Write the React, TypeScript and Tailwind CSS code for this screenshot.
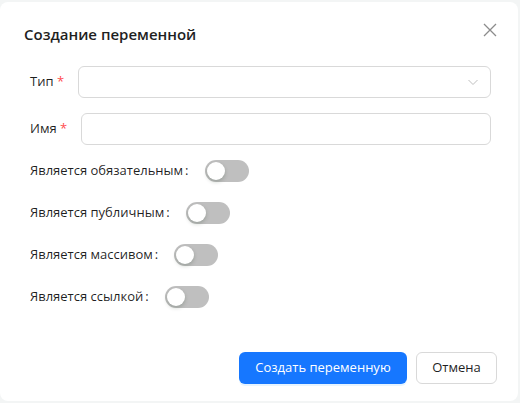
import React, { useState } from "react";

const font = { fontFamily: '"Open Sans", "Noto Sans", sans-serif' };

function Toggle({ on, onClick }: { on: boolean; onClick: () => void }) {
  return (
    <button
      onClick={onClick}
      className={
        "relative h-[22px] w-[44px] shrink-0 rounded-full transition-colors " +
        (on ? "bg-[#1677ff]" : "bg-[#bfbfbf]")
      }
    >
      <span
        className={
          "absolute top-[2px] h-[18px] w-[18px] rounded-full bg-white shadow-[0_2px_4px_rgba(0,35,11,0.2)] transition-all " +
          (on ? "left-[24px]" : "left-[2px]")
        }
      />
    </button>
  );
}

export default function App() {
  const [flags, setFlags] = useState([false, false, false, false]);
  const labels = [
    "Является обязательным",
    "Является публичным",
    "Является массивом",
    "Является ссылкой",
  ];

  return (
    <div className="h-[403px] w-[520px] bg-[#f3f5f5] pt-[2px]" style={font}>
      <div className="flex h-[399px] w-[518px] flex-col rounded-lg bg-white text-[rgba(0,0,0,0.88)]">
        {/* Header */}
        <div className="flex items-start justify-between pl-6 pr-[20px] pt-[22px]">
          <h2 className="text-[15px] font-semibold leading-[20px] text-[#1f1f1f]">Создание переменной</h2>
          <button className="mt-[-2px] text-[#8c8c8c]">
            <svg width="16" height="16" viewBox="0 0 16 16" fill="none" stroke="currentColor" strokeWidth="1.3">
              <path d="M2 2l12 12M14 2L2 14" />
            </svg>
          </button>
        </div>

        {/* Form */}
        <div className="mt-[22px] flex flex-col pl-[30px] pr-[27px] text-[13px]">
          <div className="flex h-8 items-center">
            <span className="w-[48px] shrink-0">
              Тип <span className="text-[#ff4d4f]">*</span>
            </span>
            <div className="flex h-8 flex-1 items-center justify-end rounded-md border border-[#d9d9d9] pr-[11px]">
              <svg width="12" height="12" viewBox="0 0 12 12" fill="none" stroke="#bfbfbf" strokeWidth="1">
                <path d="M1.5 4l4.5 4.5L10.5 4" />
              </svg>
            </div>
          </div>

          <div className="mt-[15px] flex h-8 items-center">
            <span className="w-[51px] shrink-0">
              Имя <span className="text-[#ff4d4f]">*</span>
            </span>
            <input className="h-8 flex-1 rounded-md border border-[#d9d9d9] px-[11px] outline-none" />
          </div>

          <div className="mt-[15px] flex flex-col gap-[20px]">
            {labels.map((l, i) => (
              <div key={l} className="flex h-[22px] items-center">
                <span className="whitespace-nowrap">
                  {l}
                  <span className="ml-[2px] mr-[16px]">:</span>
                </span>
                <Toggle
                  on={flags[i]}
                  onClick={() => setFlags(flags.map((f, j) => (j === i ? !f : f)))}
                />
              </div>
            ))}
          </div>
        </div>

        {/* Footer */}
        <div className="mt-auto mb-[17px] flex justify-end gap-[9px] pr-[21px] text-[13px]">
          <button className="h-8 w-[168px] rounded-md bg-[#1677ff] text-white shadow-[0_2px_0_rgba(5,145,255,0.1)]">
            Создать переменную
          </button>
          <button className="h-8 w-[81px] rounded-md border border-[#d9d9d9] bg-white text-[#1f1f1f]">
            Отмена
          </button>
        </div>
      </div>
    </div>
  );
}
